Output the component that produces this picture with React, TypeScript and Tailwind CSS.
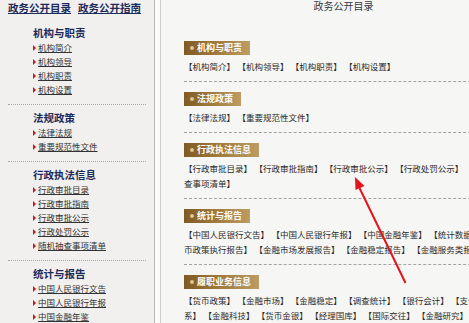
import React from 'react';

const sideSections = [
  { title: '机构与职责', items: ['机构简介', '机构领导', '机构职责', '机构设置'] },
  { title: '法规政策', items: ['法律法规', '重要规范性文件'] },
  {
    title: '行政执法信息',
    items: ['行政审批目录', '行政审批指南', '行政审批公示', '行政处罚公示', '随机抽查事项清单'],
  },
  { title: '统计与报告', items: ['中国人民银行文告', '中国人民银行年报', '中国金融年鉴'] },
];

const mainSections = [
  { title: '机构与职责', items: ['机构简介', '机构领导', '机构职责', '机构设置'] },
  { title: '法规政策', items: ['法律法规', '重要规范性文件'] },
  {
    title: '行政执法信息',
    items: ['行政审批目录', '行政审批指南', '行政审批公示', '行政处罚公示', '随机抽查事项清单'],
  },
  {
    title: '统计与报告',
    items: [
      '中国人民银行文告',
      '中国人民银行年报',
      '中国金融年鉴',
      '统计数据',
      '货币政策执行报告',
      '金融市场发展报告',
      '金融稳定报告',
      '金融服务类报告',
    ],
  },
  {
    title: '履职业务信息',
    items: [
      '货币政策',
      '金融市场',
      '金融稳定',
      '调查统计',
      '银行会计',
      '支付体系',
      '金融科技',
      '货币金银',
      '经理国库',
      '国际交往',
      '金融研究',
    ],
  },
];

const font = "font-['Liberation_Sans','Noto_Sans_CJK_SC',sans-serif]";

export default function App() {
  return (
    <div className={`relative flex w-[469px] h-[323px] overflow-hidden bg-[#fbfbfa] ${font}`}>
      {/* 左侧导航 */}
      <aside className="w-[155px] shrink-0 bg-[#f1f0ee] border-r border-[#b8b8b8]">
        <div className="flex gap-[7px] pl-[8px] pt-[1px] text-[10.5px] leading-[14px] font-bold text-[#1c2b5c]">
          <a className="underline">政务公开目录</a>
          <a className="underline">政务公开指南</a>
        </div>

        {sideSections.map((s, i) => (
          <div key={s.title}>
            <div
              className={`pl-[33px] text-[10.5px] leading-[15px] font-bold text-[#1c2b5c] ${
                i === 0 ? 'mt-[11px]' : 'mt-[6px]'
              }`}
            >
              {s.title}
            </div>
            {s.items.map((it) => (
              <div key={it} className="flex items-center pl-[33px] h-[14px]">
                <span className="mr-[2px] border-l-[3px] border-y-[3px] border-l-[#c4161c] border-y-transparent" />
                <a className="text-[8.5px] text-[#333] underline">{it}</a>
              </div>
            ))}
            {i < sideSections.length - 1 && (
              <div className="mx-[8px] mt-[7px] border-t border-dotted border-[#a9a9a9]" />
            )}
          </div>
        ))}
      </aside>

      {/* 主内容 */}
      <main className="ml-[5px] w-[346px] shrink-0 bg-[#f6f6f4] border-l border-[#cfcfcf] pl-[23px] pr-[6px]">
        <h1 className="ml-[3px] text-center text-[10px] leading-[14px] font-normal text-[#333845]">政务公开目录</h1>

        {mainSections.map((s, i) => (
          <section key={s.title} className={i === 0 ? 'mt-[27px]' : 'mt-[10px]'}>
            <div className="flex w-fit items-center h-[14px] pl-[6px] pr-[8px] bg-gradient-to-r from-[#7f5a22] via-[#a27c3e] to-[#bd9c62]">
              <span className="mr-[3px] w-[4px] h-[4px] rounded-full bg-[#dcc595]" />
              <span className="text-[9px] font-bold text-white leading-none">{s.title}</span>
            </div>
            <p className="mt-[5px] text-[8.5px] leading-[15px] text-[#2b2b2b] break-all">
              {s.items.map((it) => (
                <span key={it}>【{it}】 </span>
              ))}
            </p>
            <div className="mt-[6px] -mr-[6px] border-t border-dashed border-[#a3a3a3]" />
          </section>
        ))}
      </main>

      {/* 红色箭头标注 */}
      <svg className="absolute left-0 top-0 pointer-events-none" width="469" height="323">
        <line x1="405.5" y1="283" x2="359.5" y2="188" stroke="#e3141b" strokeWidth="2" />
        <polygon points="355,177 364.5,186 355.5,190" fill="#e3141b" />
      </svg>
    </div>
  );
}
